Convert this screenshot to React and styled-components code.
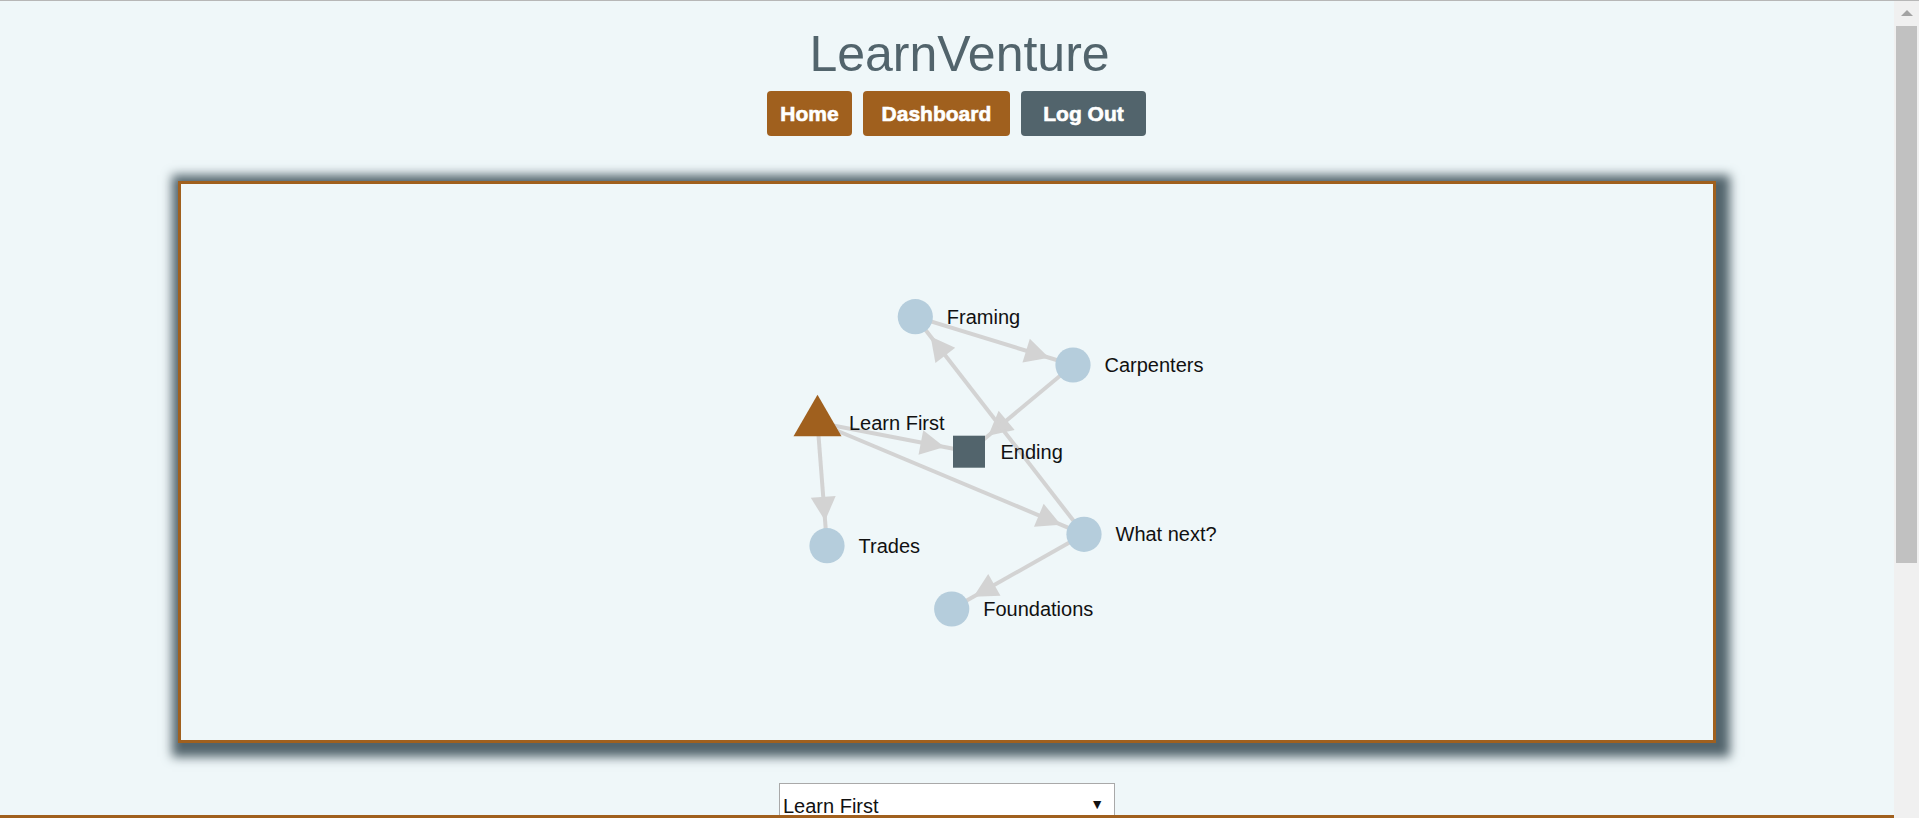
import styled, { createGlobalStyle } from 'styled-components';

const BROWN = '#a0601e';
const SLATE = '#52646c';
const NODE_BLUE = '#b5cddc';
const EDGE_GREY = '#d3d3d3';

/* graph data — positions are the laid-out result, relative to the panel */
const NODES = {
  learn: { x: 636.5, y: 238.5, label: 'Learn First', shape: 'triangle' },
  framing: { x: 734.3, y: 132.7, label: 'Framing', shape: 'circle' },
  carpenters: { x: 892, y: 181, label: 'Carpenters', shape: 'circle' },
  ending: { x: 788, y: 267.7, label: 'Ending', shape: 'square' },
  trades: { x: 646, y: 361.7, label: 'Trades', shape: 'circle' },
  whatnext: { x: 903, y: 350.3, label: 'What next?', shape: 'circle' },
  foundations: { x: 770.7, y: 425, label: 'Foundations', shape: 'circle' },
};

const EDGES = [
  ['framing', 'carpenters'],
  ['carpenters', 'ending'],
  ['whatnext', 'framing'],
  ['learn', 'ending'],
  ['learn', 'whatnext'],
  ['learn', 'trades'],
  ['whatnext', 'foundations'],
];

const arrowHead = (s, t) => {
  const dx = t.x - s.x, dy = t.y - s.y;
  const len = Math.hypot(dx, dy);
  const ux = dx / len, uy = dy / len;
  const tip = [t.x - ux * 25, t.y - uy * 25];
  const bx = t.x - ux * 49, by = t.y - uy * 49;
  const hw = 12.5;
  return `${tip[0]},${tip[1]} ${bx - uy * hw},${by + ux * hw} ${bx + uy * hw},${by - ux * hw}`;
};

const Shape = ({ node }) => {
  if (node.shape === 'triangle') {
    const h = 41.6, w = 48;
    return (
      <polygon
        points={`${node.x},${node.y - (h * 2) / 3} ${node.x - w / 2},${node.y + h / 3} ${node.x + w / 2},${node.y + h / 3}`}
        fill={BROWN}
      />
    );
  }
  if (node.shape === 'square') {
    return <rect x={node.x - 16} y={node.y - 16} width={32} height={32} fill={SLATE} />;
  }
  return <circle cx={node.x} cy={node.y} r={17.6} fill={NODE_BLUE} />;
};

const GraphDrawing = () => (
  <Svg>
    {EDGES.map(([a, b]) => {
      const s = NODES[a], t = NODES[b];
      return (
        <g key={`${a}-${b}`}>
          <line x1={s.x} y1={s.y} x2={t.x} y2={t.y} stroke={EDGE_GREY} strokeWidth="4" />
          <polygon points={arrowHead(s, t)} fill={EDGE_GREY} />
        </g>
      );
    })}
    {Object.entries(NODES).map(([id, n]) => (
      <g key={id}>
        <Shape node={n} />
        <NodeLabel x={n.x + 31.5} y={n.y + 7}>{n.label}</NodeLabel>
      </g>
    ))}
  </Svg>
);

export default function App() {
  return (
    <>
      <GlobalStyle />
      <Header>
        <Title>LearnVenture</Title>
        <Nav>
          <NavButton $bg={BROWN} $pad={13}>Home</NavButton>
          <NavButton $bg={BROWN} $pad={19}>Dashboard</NavButton>
          <NavButton $bg={SLATE} $pad={22}>Log Out</NavButton>
        </Nav>
      </Header>
      <Main>
        <GraphPanel>
          <GraphDrawing />
        </GraphPanel>
        <SelectWrap>
          <NodeSelect defaultValue="learn">
            {Object.entries(NODES).map(([id, n]) => (
              <option key={id} value={id}>{n.label}</option>
            ))}
          </NodeSelect>
        </SelectWrap>
      </Main>
      <FooterRule />
      <ScrollGutter>
        <ScrollArrow />
        <ScrollThumb />
      </ScrollGutter>
    </>
  );
}

/* ── Styles ─────────────────────────────────── */
const GUTTER = 25;

const GlobalStyle = createGlobalStyle`
  body {
    margin: 0;
    background: #eff7f9;
    border-top: 1px solid #b7b7b7;
    font-family: 'Liberation Sans', Arial, sans-serif;
  }
`;

const Header = styled.header`
  width: 100vw;
  display: flex; flex-direction: column; align-items: center;
  padding-top: 24px;
`;
const Title = styled.h1`
  margin: 0;
  font-size: 50px; line-height: 58px; font-weight: 400;
  color: ${SLATE};
`;
const Nav = styled.nav`
  display: flex; gap: 11px;
  margin: 8px 6px 0 0;
`;
const NavButton = styled.button`
  height: 45px;
  padding: 0 ${p => p.$pad}px;
  border: none; border-radius: 4px;
  background: ${p => p.$bg};
  color: #fff;
  font-family: 'Liberation Sans', Arial, sans-serif;
  font-size: 21px; font-weight: 700;
  -webkit-text-stroke: 0.6px #fff;
  cursor: pointer;
`;

const Main = styled.main`
  width: calc(100% - ${GUTTER}px);
  display: flex; flex-direction: column; align-items: center;
  padding: 45px 0 560px;
`;
const GraphPanel = styled.section`
  width: 1538px; height: 562px;
  box-sizing: border-box;
  border: 3px solid ${BROWN};
  box-shadow: 4px 4px 10px 10px ${SLATE};
`;
const Svg = styled.svg`
  display: block; width: 100%; height: 100%;
`;
const NodeLabel = styled.text`
  font-family: 'Liberation Sans', Arial, sans-serif;
  font-size: 20px;
  fill: #111;
`;

const SelectWrap = styled.div`
  position: relative;
  margin-top: 40px;
  &::after {
    content: '▼';
    position: absolute; right: 11px; top: 13px;
    font-size: 14px; color: #111;
    pointer-events: none;
  }
`;
const NodeSelect = styled.select`
  appearance: none;
  width: 336px; height: 38px;
  padding: 8px 3px 0;
  background: #fff;
  border: 1px solid #a9a9a9;
  border-radius: 0;
  font-family: 'Liberation Sans', Arial, sans-serif;
  font-size: 20px; color: #111;
`;

const FooterRule = styled.div`
  position: fixed; left: 0; right: ${GUTTER}px; bottom: 0;
  height: 3px;
  background: ${BROWN};
`;

/* window scrollbar as it appears in the capture */
const ScrollGutter = styled.aside`
  position: fixed; top: 1px; right: 0; bottom: 0;
  width: ${GUTTER}px;
  background: #f0f0f0;
  display: flex; flex-direction: column; align-items: center;
`;
const ScrollArrow = styled.div`
  margin-top: 9px;
  width: 0; height: 0;
  border-left: 6px solid transparent;
  border-right: 6px solid transparent;
  border-bottom: 6px solid #a3a3a3;
`;
const ScrollThumb = styled.div`
  margin-top: 10px;
  width: 21px; height: 537px;
  background: #c1c1c1;
`;
